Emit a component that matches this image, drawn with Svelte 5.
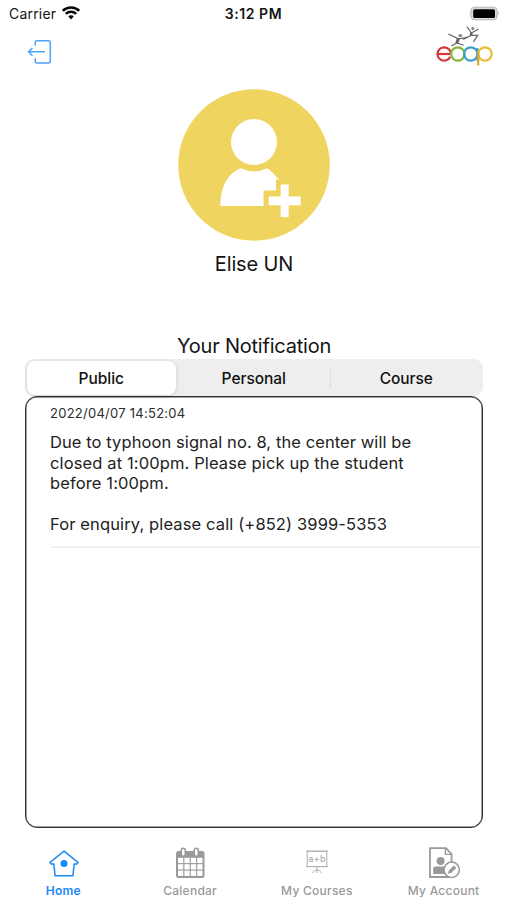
<script>
  let active = $state('Public');
  const segments = ['Public', 'Personal', 'Course'];
</script>

<div class="screen">
  <div class="status">
    <div class="carrier">
      <span>Carrier</span>
      <svg width="18" height="14" viewBox="0 0 18 14" fill="none" stroke="#080808" stroke-width="2.5">
        <path d="M.8 4.8C5.2.4 12.8.4 17.2 4.8" />
        <path d="M3.8 7.9C6.7 5.1 11.3 5.1 14.2 7.9" />
        <path d="M6.2 10.3C7.8 8.8 10.2 8.8 11.8 10.3L9 13.4z" fill="#080808" stroke="none" />
      </svg>
    </div>
    <span class="time">3:12 PM</span>
    <svg class="battery" width="30" height="16" viewBox="0 0 30 16">
      <rect x=".8" y="1.2" width="26.4" height="12.6" rx="4" fill="#ddd" stroke="#b4b4b4" />
      <rect x="3.2" y="3.2" width="21.8" height="8.8" rx="1.6" fill="#000" />
      <path d="M28 5.3q1.6 2.2 0 4.4z" fill="#999" />
    </svg>
  </div>

  <header>
    <svg class="exit" width="26" height="28" viewBox="0 0 26 28" fill="none" stroke="#4ba2fa" stroke-width="1.5">
      <path d="M8.2 7.4V4.8Q8.2 2.8 10.2 2.8H21.3Q23.3 2.8 23.3 4.8V23Q23.3 25 21.3 25H10.2Q8.2 25 8.2 23V20.2" />
      <path d="M17.8 13.8H1.8M5.5 9.9L1.6 13.8L5.5 17.7" />
    </svg>
    <svg class="logo" width="58" height="42" viewBox="0 0 58 42" fill="none">
      <g stroke="#666" stroke-width="1.2">
        <path d="M12.3 9L22.5 13.8L31.5 12.4M22.5 13.8L20.8 18L15.3 21M20.8 18L27.7 20.3" />
        <path d="M22.4 13.5L20.7 18.3" stroke-width="3" />
        <path d="M31 1.7L35.4 8L42.6 4M27 14.4L34.4 10.8L35.4 8M35.4 10.3L41.7 10.4L37.4 16.8" />
        <path d="M35.4 7.6L34.9 10.6" stroke-width="2.6" />
        <ellipse cx="24.3" cy="10.6" rx="2" ry="1.5" fill="#888" stroke="none" />
        <ellipse cx="36.8" cy="3.5" rx="1.5" ry="1.8" fill="#888" stroke="none" />
      </g>
      <g stroke-width="2.2">
        <circle cx="8.2" cy="29" r="6.7" stroke="#d6373f" stroke-dasharray="39.1 3" transform="rotate(25 8.2 29)" />
        <line x1="1.8" y1="29" x2="14.8" y2="29" stroke="#d6373f" />
        <circle cx="21.8" cy="29" r="6.7" stroke="#85b63b" />
        <circle cx="34.8" cy="29" r="6.7" stroke="#3d9bd1" />
        <line x1="41.4" y1="23" x2="41.4" y2="36" stroke="#3d9bd1" />
        <circle cx="49" cy="29" r="6.7" stroke="#e8bd31" />
        <line x1="42.2" y1="27" x2="42.2" y2="40.5" stroke="#dda52e" />
      </g>
    </svg>
  </header>

  <section class="profile">
    <svg width="152" height="152" viewBox="0 0 152 152">
      <circle cx="76" cy="76" r="75.8" fill="#f0d460" />
      <g fill="#fff">
        <circle cx="76" cy="53" r="23" />
        <path d="M42.5 117V112.5C43 97.5 50.5 84 62.5 79.3Q76 85.5 89.5 79.3Q95.5 84 100.8 90.5H98V101.5H85.5V117z" />
        <path d="M102.7 95.5H110.7V107.5H122.7V116.3H110.7V128H102.7V116.3H90.7V107.5H102.7z" />
      </g>
    </svg>
    <div class="name">Elise UN</div>
  </section>

  <h1>Your Notification</h1>

  <div class="segments">
    {#each segments as s}
      <button class:active={active === s} onclick={() => (active = s)}><span>{s}</span></button>
    {/each}
  </div>

  <main>
    <article>
      <time>2022/04/07 14:52:04</time>
      <p><span class="l1">Due to typhoon signal no. 8, the center will be</span><br /><span class="l2">closed at 1:00pm. Please pick up the student</span><br /><span class="l2">before 1:00pm.</span><br /><br /><span class="l2">For enquiry, please call (+852) 3999-5353</span></p>
    </article>
  </main>

  <nav>
    <div class="tab on">
      <svg width="34" height="36" viewBox="0 0 34 36" fill="none" stroke="#1b86f8" stroke-width="1.5">
        <path d="M17 5.2L31 16.4L29.8 18H27.2L25.9 29.8H8.1L6.8 18H4.2L3 16.4z" />
        <circle cx="17" cy="17.4" r="3.5" fill="#1b86f8" stroke="none" />
      </svg>
      <span>Home</span>
    </div>
    <div class="tab">
      <svg width="34" height="36" viewBox="0 0 34 36">
        <rect x="3" y="6" width="28.5" height="27" rx="2.5" fill="#999" />
        <g fill="#fff">
          {#each [12.8, 19.2, 25.6] as y}
            {#each [5, 11.4, 17.8, 24.2] as x}
              <rect {x} {y} width="5.3" height="5.3" />
            {/each}
          {/each}
        </g>
        <rect x="8.3" y="3.2" width="4" height="8" rx="2" fill="#fff" stroke="#999" stroke-width="1.6" />
        <rect x="21.3" y="3.2" width="4" height="8" rx="2" fill="#fff" stroke="#999" stroke-width="1.6" />
      </svg>
      <span>Calendar</span>
    </div>
    <div class="tab">
      <svg width="34" height="36" viewBox="0 0 34 36" fill="none" stroke="#b0b0b0" stroke-width="1">
        <rect x="7.2" y="6.2" width="19.6" height="15.4" />
        <path d="M6 6.2H28M6 21.6H28M17 22V28M15 25.3L12 28.3M19 25.3L22 28.3M14.8 25.3H19.2" />
        <text x="17" y="17.3" text-anchor="middle" font-size="9" fill="#aaa" stroke="none">a+b</text>
      </svg>
      <span>My Courses</span>
    </div>
    <div class="tab">
      <svg width="34" height="36" viewBox="0 0 34 36" fill="none" stroke="#999" stroke-width="1.8">
        <path d="M3 3.2H19L24.6 9V32H3z" />
        <path d="M18.4 3.5V9.4H24.4" stroke-width="1.4" />
        <circle cx="13.6" cy="16" r="4" fill="#999" stroke="none" />
        <path d="M6.2 29V23.5Q6.2 21.5 8.4 21.5H18V29z" fill="#999" stroke="none" />
        <circle cx="24.7" cy="24.8" r="7.7" fill="#fff" stroke-width="1.5" />
        <path d="M20.9 28.8L21.7 25.7L26.8 20.5L29.3 23L24 28z" fill="#999" stroke="none" />
      </svg>
      <span>My Account</span>
    </div>
  </nav>
</div>

<style>
  :global(body) { background: #fff; }
  .screen {
    width: 507px; height: 900px; overflow: hidden; box-sizing: border-box;
    display: flex; flex-direction: column; background: #fff; color: #141414;
    font-family: Inter, "Liberation Sans", sans-serif;
  }
  .status { height: 28px; display: grid; grid-template-columns: 1fr auto 1fr; align-items: center; padding: 0 7px 0 9px; box-sizing: border-box; flex: none; }
  .carrier { display: flex; align-items: center; gap: 6px; font-size: 14px; letter-spacing: .2px; margin-bottom: 1px; }
  .carrier svg { margin-bottom: 1px; }
  .time { font-size: 14px; font-weight: 600; letter-spacing: .55px; margin: 0 2px 2px 0; }
  .battery { justify-self: end; margin-bottom: 1px; }
  header { height: 61px; flex: none; display: flex; justify-content: space-between; align-items: flex-start; padding: 0 13px 0 27px; }
  .exit { margin-top: 10px; }
  .logo { margin-top: -3px; }
  .profile { height: 244px; flex: none; display: flex; flex-direction: column; align-items: center; }
  .profile svg { flex: none; }
  .name { font-size: 20px; line-height: 24px; margin-top: 11px; padding-left: 1px; letter-spacing: -.15px; }
  h1 { margin: 0; padding-left: 1px; height: 26px; line-height: 26px; text-align: center; font-size: 20px; font-weight: 400; letter-spacing: -.22px; flex: none; }
  .segments { margin: 0 24.5px 0 25px; height: 37px; flex: none; display: grid; grid-template-columns: repeat(3, 1fr); background: #eee; border-radius: 9px; }
  .segments button { border: 0; background: none; font: 500 15.5px/33px Inter, sans-serif; letter-spacing: -.05px; color: #111; padding: 1px 0 0; position: relative; }
  .segments button + button:not(.active) + button::before { content: ''; position: absolute; left: 0; top: 8px; width: 1px; height: 21px; background: #dcdcdc; }
  .segments button.active { background: #fff; margin: 2px; border-radius: 8px; box-shadow: 0 1px 4px #0002; }
  main { margin: 0 24px 0 25px; height: 432px; box-sizing: border-box; border: 1px solid #333; box-shadow: inset 0 0 0 .5px #444; border-radius: 12px; background: #fff; flex: none; }
  article { margin: 0 1px 0 24px; height: 151px; box-sizing: border-box; border-bottom: 2px solid #f2f2f2; }
  time { display: block; padding-top: 8px; font-size: 13px; line-height: 17px; letter-spacing: .26px; color: #2c2c2c; }
  p { margin: 10.4px 0 0; font-size: 16.5px; line-height: 20.4px; white-space: nowrap; color: #222; }
  .l1 { letter-spacing: .085px; }
  .l2 { letter-spacing: .125px; }
  nav { flex: 1; display: flex; padding-top: 18px; }
  .tab { flex: 1; display: flex; flex-direction: column; align-items: center; color: #999; font-size: 12px; font-weight: 500; line-height: 18px; letter-spacing: .25px; }
  .tab svg { flex: none; margin-top: -1px; margin-bottom: 1px; }
  .on { color: #1b86f8; font-weight: 600; }
  .on svg { margin: 0 0 0 1px; }
</style>
